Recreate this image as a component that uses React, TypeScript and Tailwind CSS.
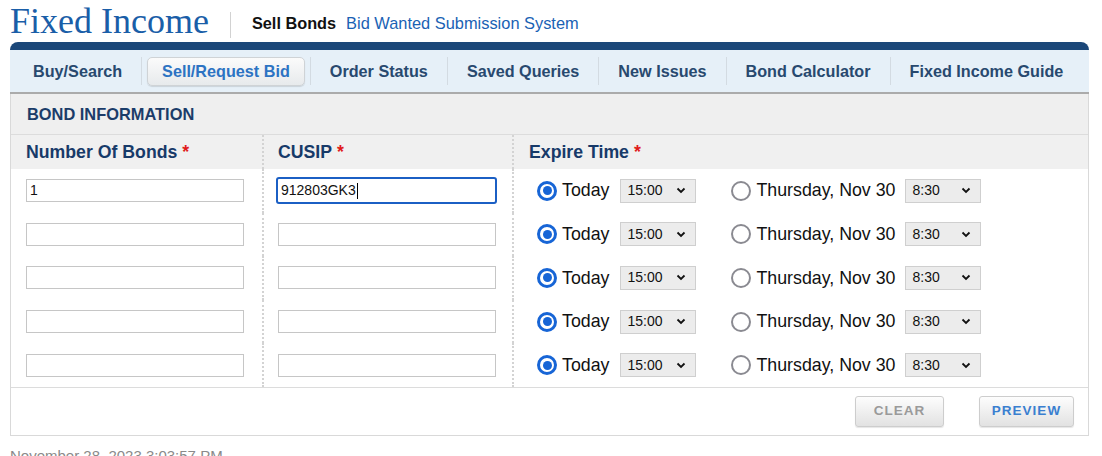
import React from "react";

const navItems = [
  "Buy/Search",
  "Sell/Request Bid",
  "Order Status",
  "Saved Queries",
  "New Issues",
  "Bond Calculator",
  "Fixed Income Guide",
];

function Radio({ checked }: { checked: boolean }) {
  if (checked) {
    return (
      <span className="flex h-[20px] w-[20px] shrink-0 items-center justify-center rounded-full border-[3px] border-[#1765d6] bg-white">
        <span className="h-[9px] w-[9px] rounded-full bg-[#1765d6]" />
      </span>
    );
  }
  return <span className="block h-[20px] w-[20px] shrink-0 rounded-full border-[2.5px] border-[#8a8a91] bg-white" />;
}

function Select({ value }: { value: string }) {
  return (
    <div className="flex h-[24px] w-[76px] shrink-0 items-center justify-between border border-[#cfcfcf] bg-[#ececec] pl-[6px] pr-[9px] text-[14px] text-[#111]">
      <span>{value}</span>
      <svg width="10" height="7" viewBox="0 0 10 7" fill="none">
        <path d="M1.5 1.5 L5 5 L8.5 1.5" stroke="#111" strokeWidth="1.8" />
      </svg>
    </div>
  );
}

function TextBox({ value, focused }: { value?: string; focused?: boolean }) {
  if (focused) {
    return (
      <div className="flex h-[27px] w-[221px] -ml-[2px] items-center rounded-[3px] border-[2px] border-[#1b5fc4] pl-[3px] text-[14px] text-[#111]">
        <span>{value}</span>
        <span className="ml-[1px] h-[16px] w-[1px] bg-black" />
      </div>
    );
  }
  return (
    <div className="flex h-[23px] w-[218px] items-center border border-[#c6c6c6] bg-white pl-[3px] text-[14px] text-[#111]">
      {value}
    </div>
  );
}

export default function App() {
  const rows = [0, 1, 2, 3, 4];
  return (
    <div className="min-h-[456px] bg-white px-[10px] font-['Liberation_Sans',Arial,sans-serif]">
      {/* Header */}
      <div className="flex h-[42px] items-center pr-[13px]">
        <span className="font-['Liberation_Serif','Times_New_Roman',serif] text-[36px] leading-none text-[#1a5ea8]">
          Fixed Income
        </span>
        <span className="mx-[21px] mb-[4px] h-[26px] w-[1px] self-end bg-[#d2d2d2]" />
        <span className="mt-[5px] text-[16.3px] font-bold text-[#111]">Sell Bonds</span>
        <span className="ml-[10px] mt-[5px] text-[16.4px] text-[#1a62b4]">Bid Wanted Submission System</span>
      </div>

      {/* Nav */}
      <div className="w-[1079px]">
        <div className="h-[8px] rounded-t-[8px] bg-[#1b4779]" />
        <div className="flex h-[44px] items-center whitespace-nowrap border-b-2 border-[#ababab] bg-[#e6f0f8] pl-[4px]">
          {navItems.map((item, i) => (
            <React.Fragment key={item}>
              {i > 0 && <span className="h-[28px] w-[1px] shrink-0 bg-[#d3dbe2]" />}
              {i === 1 ? (
                <div className="mx-[5px] flex h-[29px] shrink-0 items-center rounded-[5px] border border-[#cfd3d6] bg-gradient-to-b from-[#fbfbfb] to-[#e7eaec] px-[14px] text-[16.2px] font-bold text-[#2c73c3] shadow-[0_1px_1px_rgba(0,0,0,0.12)]">
                  {item}
                </div>
              ) : (
                <div className="shrink-0 px-[19px] text-[16.2px] font-bold text-[#28496f]">{item}</div>
              )}
            </React.Fragment>
          ))}
        </div>
      </div>

      {/* Panel */}
      <div className="w-[1079px] border-x border-b border-[#d9d9d9]">
        <div className="flex h-[41px] items-center border-b border-[#dcdcdc] bg-[#efefef] pl-[16px] text-[16.4px] font-bold text-[#1b3c69]">
          BOND INFORMATION
        </div>
        <div className="grid grid-cols-[251px_250px_1fr]">
          {/* column headers */}
          <div className="flex h-[34px] items-center bg-[#f0f0f0] pl-[15px] text-[17.7px] font-bold text-[#173a69]">
            Number Of Bonds<span className="ml-[5px] text-[#e01b1b]">*</span>
          </div>
          <div className="flex h-[34px] items-center border-l-2 border-dotted border-[#d3d3d3] bg-[#f0f0f0] pl-[14px] text-[17.7px] font-bold text-[#173a69]">
            CUSIP<span className="ml-[5px] text-[#e01b1b]">*</span>
          </div>
          <div className="flex h-[34px] items-center border-l-2 border-dotted border-[#d3d3d3] bg-[#f0f0f0] pl-[15px] text-[17.7px] font-bold text-[#173a69]">
            Expire Time<span className="ml-[5px] text-[#e01b1b]">*</span>
          </div>

          {rows.map((r) => (
            <React.Fragment key={r}>
              <div className="flex h-[43.6px] items-center pl-[15px]">
                <TextBox value={r === 0 ? "1" : ""} />
              </div>
              <div className="flex h-[43.6px] items-center border-l-2 border-dotted border-[#d3d3d3] pl-[14px]">
                <TextBox value={r === 0 ? "912803GK3" : ""} focused={r === 0} />
              </div>
              <div className="flex h-[43.6px] items-center border-l-2 border-dotted border-[#d3d3d3] pl-[23px] text-[17.8px] text-[#111]">
                <Radio checked />
                <span className="ml-[5px]">Today</span>
                <span className="ml-[11px] flex">
                  <Select value="15:00" />
                </span>
                <span className="ml-[35px] flex">
                  <Radio checked={false} />
                </span>
                <span className="ml-[5px]">Thursday, Nov 30</span>
                <span className="ml-[10px] flex">
                  <Select value="8:30" />
                </span>
              </div>
            </React.Fragment>
          ))}
        </div>

        <div className="flex h-[48px] items-center justify-end gap-[35px] border-t border-[#dcdcdc] pr-[14px]">
          <button className="flex h-[31px] w-[89px] items-center justify-center rounded-[3px] border border-[#cdcdcd] bg-gradient-to-b from-[#fdfdfd] to-[#e2e2e2] text-[13.5px] font-bold tracking-[1px] text-[#9a9a9a] shadow-[0_1px_1px_rgba(0,0,0,0.1)]">
            CLEAR
          </button>
          <button className="flex h-[31px] w-[95px] items-center justify-center rounded-[3px] border border-[#cdcdcd] bg-gradient-to-b from-[#fdfdfd] to-[#e2e2e2] text-[13.5px] font-bold tracking-[1px] text-[#3a7fd0] shadow-[0_1px_1px_rgba(0,0,0,0.1)]">
            PREVIEW
          </button>
        </div>
      </div>

      <div className="pt-[9px] text-[15px] text-[#8a8a8a]">November 28, 2023 3:03:57 PM</div>
    </div>
  );
}
